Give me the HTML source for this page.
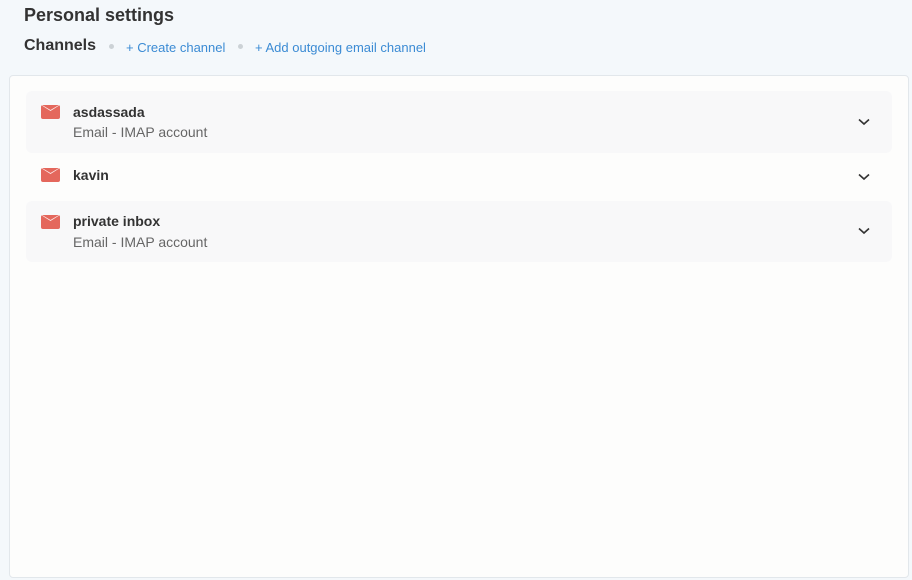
<!DOCTYPE html>
<html><head><style>
body{margin:0;width:912px;height:580px;background:#f4f8fb;font-family:"Liberation Sans",sans-serif;position:relative;overflow:hidden}
.h1{position:absolute;left:24px;top:5px;font-size:18px;font-weight:bold;color:#333}
.h2{position:absolute;left:24px;top:37px;font-size:16px;font-weight:bold;color:#333}
.dot{position:absolute;top:44px;width:5px;height:5px;border-radius:50%;background:#ccd2d6}
.lk{position:absolute;top:40px;font-size:13px;color:#3b8bd4}
.panel{position:absolute;left:9px;top:75px;width:898px;height:501px;background:#fdfdfc;border:1px solid #e2e7eb;border-radius:4px}
.row{position:absolute;left:16px;width:866px;border-radius:6px}
.row.g{background:#f8f8f9}
.ic{position:absolute;left:15px;width:19px;height:14px;background:#e4675c;border-radius:2px;overflow:hidden}
.ic svg{position:absolute;left:0;top:0}
.t{position:absolute;left:47px;font-size:14px;font-weight:bold;color:#333}
.s{position:absolute;left:47px;font-size:14px;color:#666}
.ch{position:absolute;right:22px;width:12px;height:8px}
</style></head><body>
<div class="h1">Personal settings</div>
<div class="h2">Channels</div>
<div class="dot" style="left:109px"></div>
<div class="lk" style="left:126px">+ Create channel</div>
<div class="dot" style="left:238px"></div>
<div class="lk" style="left:255px">+ Add outgoing email channel</div>
<div class="panel">
 <div class="row g" style="top:15px;height:62px">
  <div class="ic" style="top:14px"><svg width="19" height="14"><path d="M0 0 L9.5 6 L19 0 Z" fill="#fff" opacity="0.9"/><path d="M1 0 L9.5 5 L18 0 Z" fill="#e4675c"/></svg></div>
  <div class="t" style="top:13px">asdassada</div>
  <div class="s" style="top:33px">Email - IMAP account</div>
  <svg class="ch" style="top:27px" viewBox="0 0 12 8"><path d="M1 1.5 L6 6 L11 1.5" stroke="#333" stroke-width="1.6" fill="none"/></svg>
 </div>
 <div class="row" style="top:78px;height:48px">
  <div class="ic" style="top:14px"><svg width="19" height="14"><path d="M0 0 L9.5 6 L19 0 Z" fill="#fff" opacity="0.9"/><path d="M1 0 L9.5 5 L18 0 Z" fill="#e4675c"/></svg></div>
  <div class="t" style="top:13px">kavin</div>
  <svg class="ch" style="top:19px" viewBox="0 0 12 8"><path d="M1 1.5 L6 6 L11 1.5" stroke="#333" stroke-width="1.6" fill="none"/></svg>
 </div>
 <div class="row g" style="top:125px;height:61px">
  <div class="ic" style="top:14px"><svg width="19" height="14"><path d="M0 0 L9.5 6 L19 0 Z" fill="#fff" opacity="0.9"/><path d="M1 0 L9.5 5 L18 0 Z" fill="#e4675c"/></svg></div>
  <div class="t" style="top:12px">private inbox</div>
  <div class="s" style="top:33px">Email - IMAP account</div>
  <svg class="ch" style="top:26px" viewBox="0 0 12 8"><path d="M1 1.5 L6 6 L11 1.5" stroke="#333" stroke-width="1.6" fill="none"/></svg>
 </div>
</div>
</body></html>
